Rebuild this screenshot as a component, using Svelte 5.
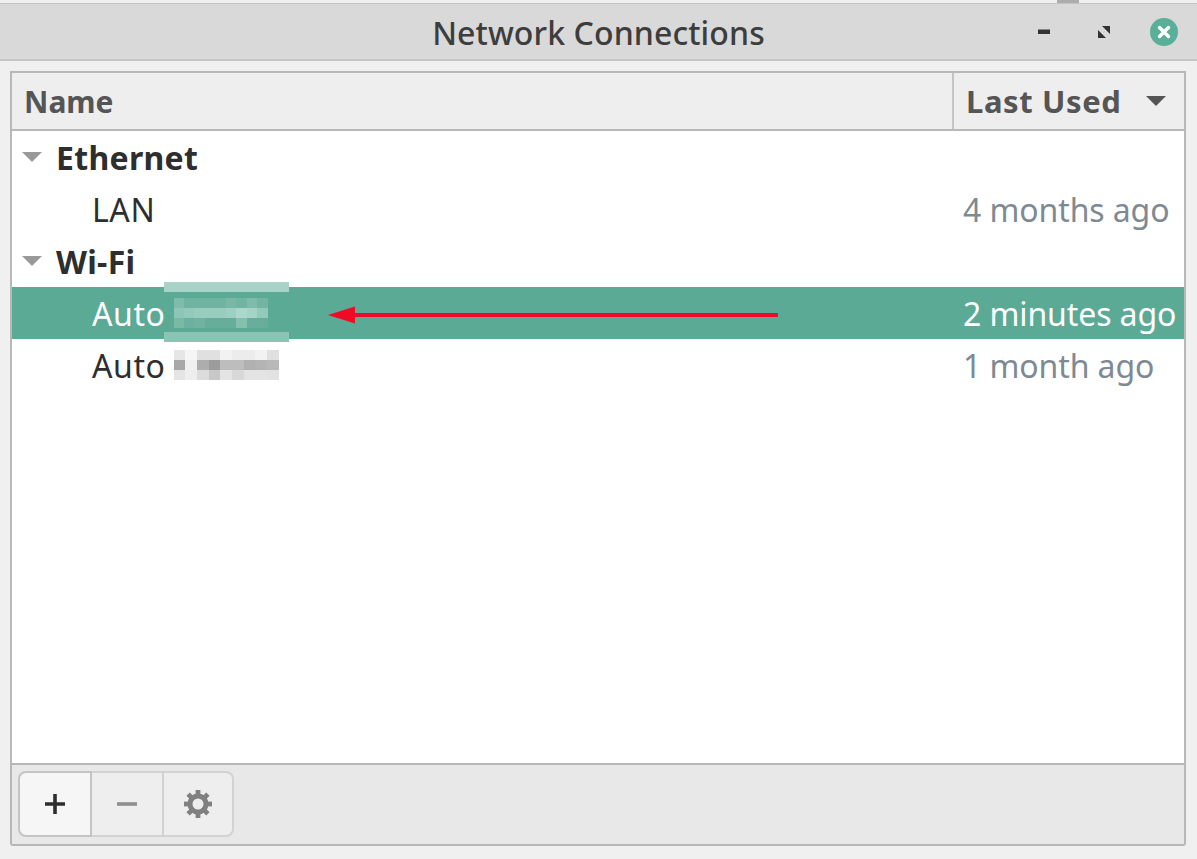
<script>
  const rows = [
    { type: 'group', name: 'Ethernet' },
    { type: 'item', name: 'LAN', used: '4 months ago' },
    { type: 'group', name: 'Wi-Fi' },
    { type: 'item', name: 'Auto', used: '2 minutes ago', selected: true, mask: 'a' },
    { type: 'item', name: 'Auto', used: '1 month ago', mask: 'b' }
  ];

  // mosaic cells that hide the network names
  const masks = {
    a: [
      ['#7fbdaa', '#6fb3a0', '#6fb3a0', '#70b3a0', '#70b3a0', '#78b8a5', '#72b4a2', '#7fbcab', '#72b5a2'],
      ['#8ec6b5', '#93c9b9', '#98cdbd', '#98ccbc', '#98ccbc', '#9dd0c1', '#abd8ca', '#a5d3c5', '#93c9b9'],
      ['#79b9a6', '#6cb19e', '#70b3a0', '#66ad9a', '#66ad9a', '#66ad9a', '#84c0ae', '#68ae9b', '#66ad9a']
    ],
    b: [
      ['#e6e6e6', '#f5f5f5', '#e0e0e0', '#e0e0e0', '#f2f2f2', '#ececec', '#ececec', '#f2f2f2', '#e0e0e0'],
      ['#a8a8a8', '#f0f0f0', '#adadad', '#9c9c9c', '#bdbdbd', '#bdbdbd', '#b0b0b0', '#b4b4b4', '#b8b8b8'],
      ['#e4e4e4', '#eeeeee', '#dcdcdc', '#c8c8c8', '#e4e4e4', '#d8d8d8', '#e4e4e4', '#e4e4e4', '#e2e2e2']
    ]
  };

  const teeth = [0, 45, 90, 135, 180, 225, 270, 315];
</script>

<div class="window">
  <div class="strip"></div>
  <header class="titlebar">
    <h1>Network Connections</h1>
    <div class="controls">
      <svg class="min" width="14" height="6" viewBox="0 0 14 6"><rect x="1" y="0.500" width="12" height="4.500" fill="#333"/></svg>
      <svg class="max" width="14" height="14" viewBox="0 0 14 14">
        <path d="M5 1H13V9Z M1 5L9 13H1Z" fill="#333"/>
      </svg>
      <svg class="close" width="28" height="28" viewBox="0 0 28 28">
        <circle cx="14" cy="14" r="14" fill="#5aaf98"/>
        <path d="M9.500 9.500L18.500 18.500M18.500 9.500L9.500 18.500" stroke="#fff" stroke-width="3.400" stroke-linecap="round"/>
      </svg>
    </div>
  </header>

  <main class="content">
    <div class="frame">
      <div class="columns">
        <div class="col name">Name</div>
        <div class="col used">
          <span>Last Used</span>
          <svg width="20" height="10" viewBox="0 0 20 10"><path d="M0 0H20L10 10Z" fill="#555"/></svg>
        </div>
      </div>

      <div class="tree">
        {#each rows as row}
          <div class="row" class:group={row.type === 'group'} class:selected={row.selected}>
            {#if row.type === 'group'}
              <svg class="expander" width="20" height="10" viewBox="0 0 20 10"><path d="M0 0H20L10 10Z" fill="#999"/></svg>
            {/if}
            <span class="label">{row.name}</span>
            {#if row.mask}
              <span class="mask">
                {#each masks[row.mask] as line}
                  {#each line as cell}
                    <i style="background:{cell}"></i>
                  {/each}
                {/each}
              </span>
            {/if}
            {#if row.used}
              <span class="when">{row.used}</span>
            {/if}
            {#if row.selected}
              <span class="band top"></span>
              <span class="band bottom"></span>
              <svg class="arrow" width="452" height="20" viewBox="0 0 452 20">
                <path d="M0 10L27 1.500V8H450V12H27V18.500Z" fill="#f00a24"/>
              </svg>
            {/if}
          </div>
        {/each}
      </div>

      <footer class="toolbar">
        <div class="buttons">
          <button class="first" aria-label="Add">
            <svg width="22" height="22" viewBox="0 0 22 22"><path d="M11 1V21M1 11H21" stroke="#2e2e2e" stroke-width="3.600"/></svg>
          </button>
          <button aria-label="Remove">
            <svg width="22" height="22" viewBox="0 0 22 22"><path d="M1 11H21" stroke="#8f8f8f" stroke-width="3.600"/></svg>
          </button>
          <button aria-label="Settings">
            <svg width="30" height="30" viewBox="0 0 30 30">
              <circle cx="15" cy="15" r="8" fill="none" stroke="#808080" stroke-width="5"/>
              {#each teeth as angle}
                <rect x="12.600" y="1" width="4.800" height="6" fill="#808080" transform="rotate({angle} 15 15)"/>
              {/each}
            </svg>
          </button>
        </div>
      </footer>
    </div>
  </main>
</div>

<style>
  :global(body) {
    margin: 0;
    background: #f0f0f0;
  }

  .window {
    display: flex;
    flex-direction: column;
    height: 859px;
    overflow: hidden;
    font-family: "Noto Sans", "Open Sans", sans-serif;
    color: #2e2e2e;
  }

  .strip {
    position: relative;
    height: 3px;
    background: #efefef;
    border-bottom: 1px solid #c4c4c4;
  }

  /* bit of another window peeking out above the titlebar */
  .strip::after {
    content: "";
    position: absolute;
    left: 1057px;
    top: 0;
    width: 22px;
    height: 3px;
    background: #adadad;
  }

  .titlebar {
    position: relative;
    display: flex;
    align-items: center;
    justify-content: flex-end;
    height: 55px;
    background: #d9d9d9;
    border-bottom: 2px solid #c6c6c6;
  }

  .titlebar h1 {
    position: absolute;
    left: 0;
    right: 0;
    margin: 0;
    padding-top: 2px;
    text-align: center;
    font-size: 32px;
    font-weight: 500;
    letter-spacing: 0.1px;
    color: #3d3d3d;
  }

  .controls {
    position: relative;
    display: flex;
    align-items: center;
    padding-right: 19px;
  }

  .min {
    margin-right: 46px;
  }

  .max {
    margin-right: 39px;
  }

  .content {
    flex: 1;
    display: flex;
    min-height: 0;
    padding: 10px 11px 13px 10px;
  }

  .frame {
    flex: 1;
    display: flex;
    flex-direction: column;
    border: 2px solid #b8b8b8;
    border-radius: 0 0 3px 3px;
  }

  .columns {
    display: flex;
    height: 56px;
    background: #eeeeee;
    border-bottom: 2px solid #b8b8b8;
    font-size: 30px;
    font-weight: 700;
    color: #555;
  }

  .col {
    display: flex;
    align-items: center;
  }

  .col.name {
    flex: 1;
    padding-left: 12px;
  }

  .col.used {
    box-sizing: border-box;
    width: 232px;
    gap: 25px;
    padding-left: 12px;
    border-left: 2px solid #c4c4c4;
    font-size: 31px;
    letter-spacing: 0.6px;
  }

  .tree {
    flex: 1;
    background: #fff;
  }

  .row {
    position: relative;
    display: flex;
    align-items: center;
    height: 52px;
    padding-left: 80px;
    font-size: 32px;
    letter-spacing: 0.6px;
  }

  .row.group {
    padding-left: 10px;
    font-weight: 700;
    letter-spacing: 0.3px;
  }

  .expander {
    margin-right: 14px;
  }

  .row.selected {
    background: #5aaa96;
    color: #fff;
  }

  .mask {
    display: grid;
    grid-template-columns: repeat(9, 1fr);
    grid-template-rows: repeat(3, 10px);
    width: 94px;
    margin-left: 8px;
  }

  .row:last-child .mask {
    width: 105px;
  }

  .when {
    margin-left: auto;
    width: 221px;
    color: #7d8a93;
    letter-spacing: -0.1px;
  }

  .row.selected .when {
    color: #fff;
  }

  .band {
    position: absolute;
    left: 152px;
    width: 125px;
    height: 10px;
  }

  .band.top {
    top: -5px;
    background: #a9d3c6;
  }

  .band.bottom {
    bottom: -3px;
    background: #8cc4b3;
  }

  .arrow {
    position: absolute;
    left: 316px;
    top: 18px;
  }

  .toolbar {
    flex: 0 0 auto;
    height: 81px;
    box-sizing: border-box;
    padding: 6px 0 0 6px;
    background: #e8e8e8;
    border-top: 2px solid #b8b8b8;
  }

  .buttons {
    display: inline-flex;
  }

  .buttons button {
    display: flex;
    align-items: center;
    justify-content: center;
    width: 72px;
    height: 66px;
    padding: 0;
    background: #eeeeee;
    border: 2px solid #d2d2d2;
    border-left: 0;
  }

  .buttons button.first {
    width: 74px;
    background: #f6f6f6;
    border: 2px solid #c4c4c4;
    border-radius: 8px 0 0 8px;
  }

  .buttons button:last-child {
    width: 70px;
    border-radius: 0 8px 8px 0;
  }
</style>
